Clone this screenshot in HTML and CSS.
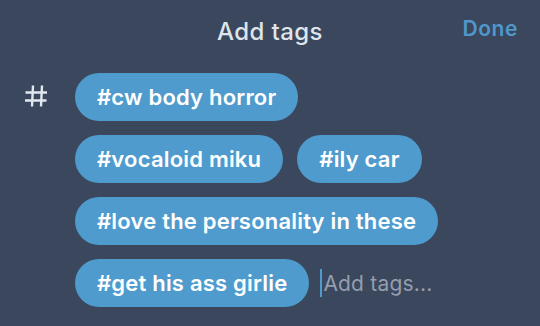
FILE: index.html
```html
<!DOCTYPE html>
<html>
<head>
<meta charset="utf-8">
<link rel="stylesheet" href="styles.css">
</head>
<body>
<div class="screen">
  <header class="header">
    <div class="title">Add tags</div>
    <div class="done">Done</div>
  </header>
  <div class="editor">
    <div class="hash">
      <svg width="24" height="24" viewBox="0 0 24 24" aria-label="#">
        <path d="M9 1.5 L8 22.5 M18 1.5 L17 22.5 M1.5 8.5 H23 M1 16.5 H22.5" stroke="#e3e7ee" stroke-width="2.4" fill="none"/>
      </svg>
    </div>
    <div class="tags">
      <span class="tag">#cw body horror</span>
      <span class="tag">#vocaloid miku</span>
      <span class="tag">#ily car</span>
      <span class="tag">#love the personality in these</span>
      <span class="tag">#get his ass girlie</span>
      <span class="input"><span class="caret"></span><span class="placeholder">Add tags...</span></span>
    </div>
  </div>
</div>
</body>
</html>
```

FILE: styles.css
```css
html, body {
  margin: 0;
  padding: 0;
  background: #3a475c;
}
.screen {
  width: 540px;
  height: 326px;
  background: #3a475c;
  font-family: Inter, "Noto Sans", sans-serif;
  overflow: hidden;
}
.header {
  height: 64px;
  display: flex;
  align-items: center;
  justify-content: center;
  position: relative;
}
.title {
  color: #dfe4ec;
  font-size: 24px;
  font-weight: 500;
  letter-spacing: 0.4px;
  margin-top: -2px;
}
.done {
  position: absolute;
  right: 22px;
  top: 16px;
  color: #4f97cc;
  font-size: 21px;
  font-weight: 600;
  letter-spacing: 0.6px;
}
.editor {
  display: flex;
  padding-top: 9px;
}
.hash {
  width: 75px;
  height: 48px;
  box-sizing: border-box;
  padding-left: 24px;
  display: flex;
  align-items: center;
}
.hash svg {
  display: block;
  margin-top: -2px;
}
.tags {
  flex: 1;
  display: flex;
  flex-wrap: wrap;
  gap: 14px 14px;
  align-items: center;
  padding-right: 30px;
}
.tag {
  height: 48px;
  line-height: 48px;
  padding: 0 22px;
  border-radius: 24px;
  background: #4f9bcd;
  color: #ffffff;
  font-size: 22px;
  font-weight: 600;
  letter-spacing: 0.2px;
  white-space: nowrap;
}
.input {
  display: flex;
  align-items: center;
  height: 48px;
  margin-left: -3px;
}
.caret {
  width: 2px;
  height: 28px;
  background: #4f9bcd;
  margin-right: 1px;
}
.placeholder {
  color: #959eae;
  font-size: 21px;
  font-weight: 400;
  letter-spacing: 0.2px;
}
```
